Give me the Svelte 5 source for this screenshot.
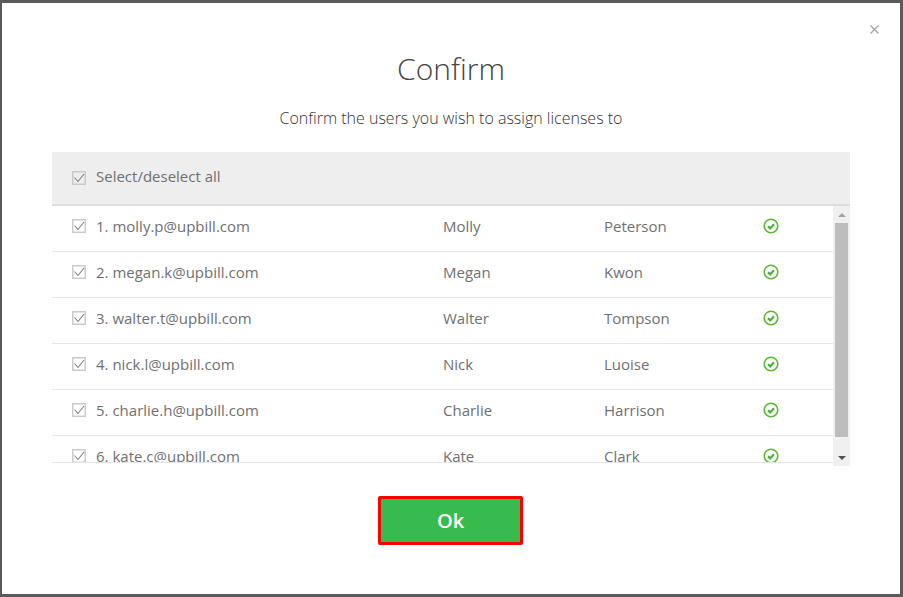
<script lang="ts">
  const users = [
    { email: 'molly.p@upbill.com', first: 'Molly', last: 'Peterson' },
    { email: 'megan.k@upbill.com', first: 'Megan', last: 'Kwon' },
    { email: 'walter.t@upbill.com', first: 'Walter', last: 'Tompson' },
    { email: 'nick.l@upbill.com', first: 'Nick', last: 'Luoise' },
    { email: 'charlie.h@upbill.com', first: 'Charlie', last: 'Harrison' },
    { email: 'kate.c@upbill.com', first: 'Kate', last: 'Clark' },
  ];
</script>

<div class="backdrop">
  <div class="modal">
    <button class="close" aria-label="Close">
      <svg width="9" height="9" viewBox="0 0 9 9"><path d="M.5.5l8 8M8.5.5l-8 8" stroke="#a3a3a3" stroke-width="1.3" fill="none" /></svg>
    </button>
    <h1>Confirm</h1>
    <p class="sub">Confirm the users you wish to assign licenses to</p>

    <div class="table">
      <div class="head">
        {@render checkbox()}
        <span>Select/deselect all</span>
      </div>
      <div class="body">
        <div class="rows">
          {#each users as u, i}
            <div class="row">
              <div class="cell-email">
                {@render checkbox()}
                <span>{i + 1}. {u.email}</span>
              </div>
              <span class="cell-first">{u.first}</span>
              <span class="cell-last">{u.last}</span>
              <svg class="status" width="16" height="16" viewBox="0 0 16 16">
                <circle cx="8" cy="8" r="6.8" fill="none" stroke="#5cb82f" stroke-width="1.6" />
                <path d="M5 8.2l2.2 2.2L11 6.3" fill="none" stroke="#45b03c" stroke-width="2.2" />
              </svg>
            </div>
          {/each}
        </div>
        <div class="scrollbar">
          <div class="arrow"><i class="up"></i></div>
          <div class="track"><div class="thumb"></div></div>
          <div class="arrow"><i class="down"></i></div>
        </div>
      </div>
    </div>

    <button class="ok">Ok</button>
  </div>
</div>

{#snippet checkbox()}
  <svg class="check" width="14" height="14" viewBox="0 0 14 14">
    <rect x=".75" y=".75" width="12.5" height="12.5" fill="none" stroke="#cacaca" stroke-width="1.5" />
    <path d="M2.5 6.5l3.5 4L12 3" fill="none" stroke="#77808c" stroke-width="1.1" />
  </svg>
{/snippet}

<style>
  :global(body) { margin: 0; background: #5a5a5a; }
  .backdrop {
    width: 903px; height: 597px; box-sizing: border-box; overflow: hidden;
    padding: 3px 3px 3px 2px;
    font-family: "Open Sans", sans-serif; color: #666;
  }
  .modal {
    position: relative; height: 100%; background: #fff;
    display: flex; flex-direction: column; align-items: center;
  }
  .close {
    position: absolute; top: 22px; right: 21px; padding: 0;
    border: none; background: none; display: flex;
  }
  h1 {
    margin: 43px 0 0; font-size: 30px; font-weight: 300; line-height: 45px; color: #444;
  }
  .sub {
    margin: 16px 0 0; font-size: 16px; font-weight: 300; line-height: 22px; color: #333;
  }
  .table { margin-top: 23px; width: 798px; }
  .head {
    height: 52px; background: #eee; border-bottom: 2px solid #ddd;
    display: flex; align-items: center; gap: 10px; padding-left: 20px;
    font-size: 15px; color: #707070;
  }
  .head span { position: relative; top: -2px; }
  .body { display: flex; height: 260px; }
  .rows {
    flex: 1; height: 256px; overflow: hidden; border-bottom: 1px solid #e6e6e6;
  }
  .row {
    height: 46px; box-sizing: border-box; border-bottom: 1px solid #e6e6e6;
    padding-bottom: 5px;
    display: flex; align-items: center; font-size: 15px; color: #707070;
  }
  .cell-email { width: 391px; display: flex; align-items: center; gap: 10px; padding-left: 20px; box-sizing: border-box; }
  .cell-first { width: 161px; }
  .cell-last { width: 159px; }
  .check { flex-shrink: 0; }
  .status { display: block; }
  .scrollbar {
    width: 17px; background: #f0f0f0; display: flex; flex-direction: column;
  }
  .arrow { height: 17px; display: flex; align-items: center; justify-content: center; }
  .arrow i { width: 0; height: 0; border-left: 4px solid transparent; border-right: 4px solid transparent; }
  .up { border-bottom: 4px solid #a3a3a3; }
  .down { border-top: 4px solid #505050; }
  .track { flex: 1; padding: 0 2px; }
  .thumb { height: 214px; background: #bdbdbd; }
  .ok {
    margin: 30px 1px 0 0; width: 145px; height: 49px; box-sizing: border-box;
    background: #37bb4f; border: 3px solid #f00; border-radius: 2px;
    color: #fff; font-family: inherit; font-size: 20px; font-weight: 600;
  }
</style>
